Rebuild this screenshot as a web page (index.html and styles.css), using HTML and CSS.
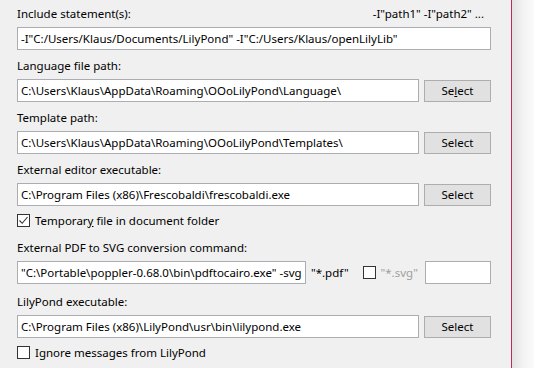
FILE: index.html
```html
<!DOCTYPE html>
<html lang="en">
<head>
    <meta charset="UTF-8">
    <title>OOoLilyPond Config</title>
    <link rel="stylesheet" href="styles.css">
</head>
<body>
    <div class="window">
        <div class="panel">
            <div class="label head">
                <span>Include statement(s):</span>
                <span class="hint">-I"path1" -I"path2" ...</span>
            </div>
            <div class="textbox full">-I"C:/Users/Klaus/Documents/LilyPond" -I"C:/Users/Klaus/openLilyLib"</div>

            <div class="label">Language file path:</div>
            <div class="row">
                <div class="textbox">C:\Users\Klaus\AppData\Roaming\OOoLilyPond\Language\</div>
                <div class="button">Se<u>l</u>ect</div>
            </div>

            <div class="label">Template path:</div>
            <div class="row">
                <div class="textbox">C:\Users\Klaus\AppData\Roaming\OOoLilyPond\Templates\</div>
                <div class="button">Select</div>
            </div>

            <div class="label">External editor executable:</div>
            <div class="row">
                <div class="textbox">C:\Program Files (x86)\Frescobaldi\frescobaldi.exe</div>
                <div class="button">Select</div>
            </div>
            <div class="check">
                <span class="box checked">
                    <svg width="11" height="11" viewBox="0 0 11 11"><path d="M1.5 5.5 L4.2 8.3 L9.5 2" fill="none" stroke="#333" stroke-width="1.1"/></svg>
                </span>
                <span>Temporar<u>y</u> file in document folder</span>
            </div>

            <div class="label after-check">External PDF to SVG conversion command:</div>
            <div class="row cmd-row">
                <div class="textbox cmd">"C:\Portable\poppler-0.68.0\bin\pdftocairo.exe" -svg</div>
                <span class="ext">"*.pdf"</span>
                <span class="box"></span>
                <span class="ext disabled">"*.svg"</span>
                <div class="textbox small"></div>
            </div>

            <div class="label lily">LilyPond executable:</div>
            <div class="row">
                <div class="textbox">C:\Program Files (x86)\LilyPond\usr\bin\lilypond.exe</div>
                <div class="button">Select</div>
            </div>
            <div class="check">
                <span class="box"></span>
                <span>Ignore messages from LilyPond</span>
            </div>
        </div>
        <div class="shadow"></div>
    </div>
</body>
</html>
```

FILE: styles.css
```css
body {
    margin: 0;
    background: #fafafa;
    font-family: "Segoe UI", "Noto Sans", sans-serif;
    font-size: 11.5px;
    color: #000;
}
.window {
    display: flex;
    height: 368px;
}
.panel {
    width: 512px;
    box-sizing: border-box;
    padding: 6px 0 0 17px;
    background: #f0f0f0;
    border-right: 1px solid #c4285a;
}
.shadow {
    flex: 1;
    background: linear-gradient(to right, #e2e2e2, #f3f3f3 50%, #fafafa);
}
.label {
    height: 16px;
    line-height: 16px;
    margin: 8px 0 5px;
}
.label.head {
    margin-top: 0;
    display: flex;
    justify-content: space-between;
    width: 467px;
}
.label.after-check {
    margin-top: 12px;
}
.label.lily {
    margin-top: 10px;
}
.row {
    display: flex;
    align-items: center;
}
.cmd-row {
    width: 474px;
}
.textbox {
    box-sizing: border-box;
    width: 402px;
    height: 23px;
    line-height: 21px;
    padding: 0 3px;
    background: #fff;
    border: 1px solid #abadb3;
    white-space: nowrap;
    overflow: hidden;
}
.textbox.full {
    width: 474px;
}
.textbox.cmd {
    width: 289px;
}
.textbox.small {
    width: 66px;
    margin-left: auto;
}
.button {
    box-sizing: border-box;
    width: 67px;
    height: 22px;
    line-height: 20px;
    margin-left: 5px;
    text-align: center;
    background: #e1e1e1;
    border: 1px solid #adadad;
}
.ext {
    margin-left: 5px;
}
.ext.disabled {
    color: #a0a0a0;
    margin-left: 5px;
}
.box {
    box-sizing: border-box;
    display: inline-flex;
    align-items: center;
    justify-content: center;
    width: 13px;
    height: 13px;
    background: #fff;
    border: 1px solid #333;
}
.row .box {
    margin-left: 14px;
}
.check {
    display: flex;
    align-items: center;
    gap: 5px;
    height: 16px;
    margin-top: 6px;
}
```
